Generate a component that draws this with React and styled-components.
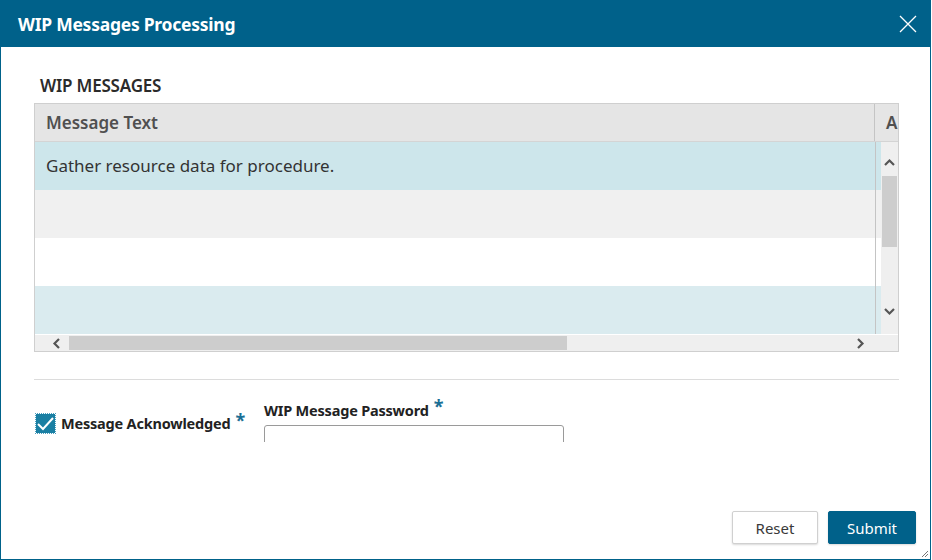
import React from 'react'
import styled, { createGlobalStyle } from 'styled-components'

const GlobalStyle = createGlobalStyle`
    html, body {
        margin: 0;
        padding: 0;
        background: #fff;
        font-family: "Noto Sans", "Open Sans", sans-serif;
    }
    * {
        box-sizing: border-box;
    }
`
const StyledDialog = styled.div`
    width: 931px;
    height: 560px;
    border: solid 1px #00628a;
    border-top: none;
    display: flex;
    flex-direction: column;
    background: #fff;
    position: relative;
`
const StyledTitleBar = styled.div`
    height: 47px;
    flex: none;
    background-color: #00618a;
    display: flex;
    align-items: center;
    justify-content: space-between;
    padding: 0 14px 0 18px;
    margin: 0 -1px;
    color: #fff;
    h1 {
        margin: 0;
        font-size: 17.5px;
        font-weight: 700;
        letter-spacing: -0.25px;
    }
`
const StyledBody = styled.div`
    height: 395px;
    flex: none;
    overflow: hidden;
    padding: 0 31px 0 33px;
`
const StyledSectionTitle = styled.div`
    font-size: 17px;
    font-weight: 600;
    color: #2b2b2b;
    padding: 27px 0 0 6px;
    height: 56px;
    line-height: 24px;
    letter-spacing: -0.2px;
`
const StyledGrid = styled.div`
    height: 249px;
    border: solid 1px #cfcfcf;
    display: grid;
    grid-template-rows: 38px 192px 17px;
    overflow: hidden;
`
const StyledHeaderRow = styled.div`
    display: flex;
    background: #e5e5e5;
    border-bottom: solid 1px #d4d4d4;
    color: #505050;
    font-size: 17px;
    font-weight: 600;
    line-height: 37px;
`
const StyledHeaderCell = styled.div`
    flex: ${props => props.wide ? '1' : 'none'};
    width: ${props => props.wide ? 'auto' : '23px'};
    padding-left: 11px;
    border-right: ${props => props.wide ? 'solid 1px #c4c4c4' : 'none'};
    overflow: hidden;
    white-space: nowrap;
`
const StyledRows = styled.div`
    display: flex;
`
const StyledRowList = styled.div`
    flex: 1;
    position: relative;
    &::after {
        content: '';
        position: absolute;
        top: 0;
        bottom: 0;
        right: 5px;
        width: 1px;
        background: #c4c4c4;
    }
`
const StyledRow = styled.div`
    height: 48px;
    background: ${props => props.bg};
    font-size: 17px;
    color: #333;
    line-height: 48px;
    padding-left: 11px;
`
const StyledVScroll = styled.div`
    width: 17px;
    background: #efefef;
    position: relative;
    .thumb {
        position: absolute;
        top: 34px;
        left: 1px;
        width: 15px;
        height: 71px;
        background: #cdcdcd;
    }
`
const StyledHScroll = styled.div`
    background: #efefef;
    position: relative;
    border-top: solid 1px #fff;
    .thumb {
        position: absolute;
        top: 1px;
        left: 34px;
        width: 498px;
        height: 14px;
        background: #cdcdcd;
    }
`
const StyledArrow = styled.svg`
    position: absolute;
    width: 11px;
    height: 11px;
    left: ${props => props.x}px;
    top: ${props => props.y}px;
`
const StyledDivider = styled.div`
    height: 1px;
    background: #dcdcdc;
    margin-top: 27px;
`
const StyledFormRow = styled.div`
    display: flex;
    align-items: flex-start;
    padding-top: 21px;
    gap: 19px;
`
const StyledCheckField = styled.label`
    display: flex;
    align-items: center;
    margin-top: 10px;
    font-size: 14.5px;
    font-weight: 700;
    color: #222;
    letter-spacing: -0.2px;
`
const StyledCheckbox = styled.span`
    width: 19px;
    height: 19px;
    background: #1a7fa3;
    outline: dotted 1px #4aa0c0;
    display: flex;
    align-items: center;
    justify-content: center;
    margin: 0 6px 0 2px;
`
const StyledRequired = styled.span`
    color: #1a6f95;
    font-size: 18px;
    font-weight: 700;
    margin-left: 5px;
    position: relative;
    top: -3px;
`
const StyledField = styled.div`
    display: flex;
    flex-direction: column;
    label {
        font-size: 14.5px;
        font-weight: 700;
        color: #222;
        letter-spacing: -0.2px;
        height: 24px;
        line-height: 17px;
    }
`
const StyledInput = styled.div`
    width: 300px;
    height: 34px;
    border: solid 1px #9a9a9a;
    border-radius: 3px;
`
const StyledFooter = styled.div`
    flex: 1;
    display: flex;
    justify-content: flex-end;
    align-items: flex-start;
    gap: 10px;
    padding: 69px 14px 0 0;
`
const StyledButton = styled.button`
    height: 33px;
    width: ${props => props.primary ? '88px' : '86px'};
    border-radius: 2px;
    font-family: inherit;
    font-size: 15px;
    background: ${props => props.primary ? '#00618a' : '#fff'};
    color: ${props => props.primary ? '#fff' : '#3a3a3a'};
    border: solid 1px ${props => props.primary ? '#00618a' : '#d0d0d0'};
    box-shadow: 0 1px 2px rgba(0,0,0,0.15);
`
const StyledGrip = styled.svg`
    position: absolute;
    right: 1px;
    bottom: 1px;
`

const Chevron = ({ dir, x, y }) => {
    const d = {
        up: 'M1 8 L5.5 3.5 L10 8',
        down: 'M1 3 L5.5 7.5 L10 3',
        left: 'M8 1 L3.5 5.5 L8 10',
        right: 'M3 1 L7.5 5.5 L3 10'
    }[dir]
    return (
        <StyledArrow x={x} y={y} viewBox="0 0 11 11">
            <path d={d} fill="none" stroke="#555" strokeWidth="2.2" />
        </StyledArrow>
    )
}

const App = () => {
    return (
        <>
            <GlobalStyle />
            <StyledDialog>
                <StyledTitleBar>
                    <h1>WIP Messages Processing</h1>
                    <svg width="18" height="18" viewBox="0 0 18 18">
                        <path d="M1 1 L17 17 M17 1 L1 17" stroke="#fff" strokeWidth="1.3" />
                    </svg>
                </StyledTitleBar>
                <StyledBody>
                    <StyledSectionTitle>WIP MESSAGES</StyledSectionTitle>
                    <StyledGrid>
                        <StyledHeaderRow>
                            <StyledHeaderCell wide>Message Text</StyledHeaderCell>
                            <StyledHeaderCell>A</StyledHeaderCell>
                        </StyledHeaderRow>
                        <StyledRows>
                            <StyledRowList>
                                <StyledRow bg="#cde6eb">Gather resource data for procedure.</StyledRow>
                                <StyledRow bg="#f0f0f0" />
                                <StyledRow bg="#fff" />
                                <StyledRow bg="#daebef" />
                            </StyledRowList>
                            <StyledVScroll>
                                <Chevron dir="up" x={3} y={15} />
                                <div className="thumb" />
                                <Chevron dir="down" x={3} y={164} />
                            </StyledVScroll>
                        </StyledRows>
                        <StyledHScroll>
                            <Chevron dir="left" x={16} y={3} />
                            <div className="thumb" />
                            <Chevron dir="right" x={820} y={3} />
                        </StyledHScroll>
                    </StyledGrid>
                    <StyledDivider />
                    <StyledFormRow>
                        <StyledCheckField>
                            <StyledCheckbox>
                                <svg width="17" height="15" viewBox="0 0 17 15">
                                    <path d="M1 8 L6 13 L16 2" fill="none" stroke="#fff" strokeWidth="2" />
                                </svg>
                            </StyledCheckbox>
                            Message Acknowledged
                            <StyledRequired>*</StyledRequired>
                        </StyledCheckField>
                        <StyledField>
                            <label>WIP Message Password<StyledRequired>*</StyledRequired></label>
                            <StyledInput />
                        </StyledField>
                    </StyledFormRow>
                </StyledBody>
                <StyledFooter>
                    <StyledButton>Reset</StyledButton>
                    <StyledButton primary>Submit</StyledButton>
                </StyledFooter>
                <StyledGrip width="10" height="10" viewBox="0 0 10 10">
                    <path d="M9 3 L3 9 M9 6 L6 9" stroke="#777" strokeWidth="1" />
                </StyledGrip>
            </StyledDialog>
        </>
    )
}

export default App
